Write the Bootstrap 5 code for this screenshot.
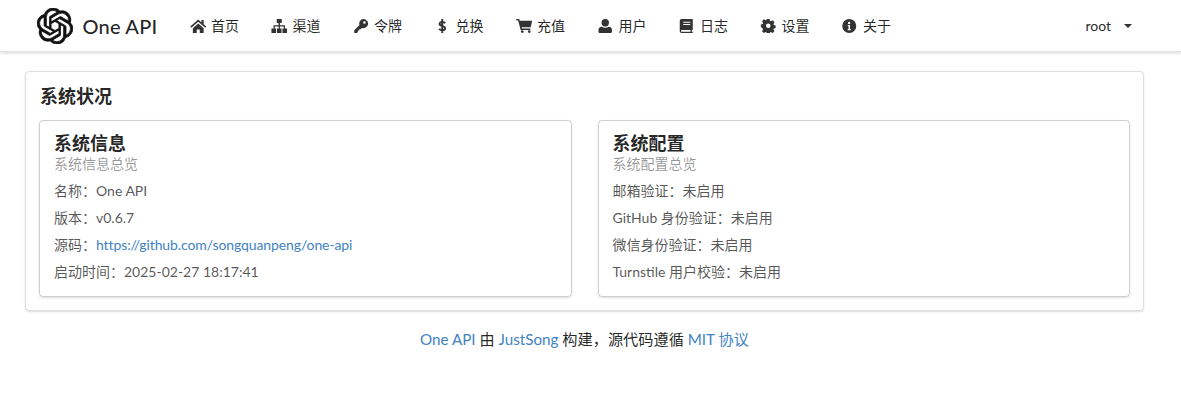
<!DOCTYPE html>
<html lang="zh">
<head>
<meta charset="utf-8">
<title>One API</title>
<link href="https://cdn.jsdelivr.net/npm/bootstrap@5.3.0/dist/css/bootstrap.min.css" rel="stylesheet">
<style>
html,body{height:100%;overflow:hidden}
body{font-family:Lato,"Noto Sans CJK SC",sans-serif;font-size:14px;line-height:20px;color:rgba(0,0,0,.87);background:#fff}
.page-wrap{width:1169px}
.topbar{height:52px;margin-right:-12px;background:#fff;box-shadow:0 1px 3px rgba(34,36,38,.2);border-bottom:1px solid #e3e3e3;padding-left:21px}
.topbar .brand-item{width:152.6px;padding:0 16px;font-size:20px;font-weight:500;letter-spacing:.2px;color:rgba(0,0,0,.87);text-decoration:none;gap:9.5px;white-space:nowrap}
.topbar .menu-item{padding:0 16px;color:rgba(0,0,0,.87);text-decoration:none;white-space:nowrap}
.menu-ico{width:16.5px;height:14px;margin-right:5px;fill:#333;flex:none}
.dollar-ico{fill:none;stroke:#333;stroke-width:2}
.user-item{margin-left:auto;padding-right:49px;color:rgba(0,0,0,.87)}
.user-caret{width:0;height:0;border-left:4px solid transparent;border-right:4px solid transparent;border-top:4px solid #333;margin-left:13px}
.main-wrap{padding:19px 25px 0}
.status-panel{border:1px solid rgba(34,36,38,.15);border-radius:4px;box-shadow:0 1px 2px rgba(34,36,38,.15);padding:13px;height:240px}
.status-title{font-size:18px;font-weight:700;line-height:23px;margin:0 0 12px 1px;color:rgba(0,0,0,.87)}
.info-row{--bs-gutter-x:26px}
.info-box{border:1px solid rgba(34,36,38,.22);border-radius:4px;box-shadow:0 1px 2px rgba(34,36,38,.15);padding:11px 14px 0;height:177px}
.box-head{font-size:18px;font-weight:700;line-height:23px;color:rgba(0,0,0,.85)}
.box-meta{color:rgba(0,0,0,.42);line-height:18px;margin-bottom:4px}
.box-line{color:rgba(0,0,0,.68);line-height:27px}
.box-line a,.foot-line a{color:#4183c4;text-decoration:none}
.box-line a{letter-spacing:-.1px}
.foot-line{text-align:center;margin-top:18px;color:rgba(0,0,0,.87);line-height:20px;font-size:15.2px}
</style>
</head>
<body>
<div class="page-wrap">
<nav class="topbar d-flex align-items-stretch">
<a class="brand-item d-flex align-items-center" href="#">
<svg width="36" height="36" viewBox="0 0 24 24" fill="#111" stroke="#111" stroke-width=".5" class="flex-shrink-0"><path d="M22.2819 9.8211a5.9847 5.9847 0 0 0-.5157-4.9108 6.0462 6.0462 0 0 0-6.5098-2.9A6.0651 6.0651 0 0 0 4.9807 4.1818a5.9847 5.9847 0 0 0-3.9977 2.9 6.0462 6.0462 0 0 0 .7427 7.0966 5.98 5.98 0 0 0 .511 4.9107 6.051 6.051 0 0 0 6.5146 2.9001A5.9847 5.9847 0 0 0 13.2599 24a6.0557 6.0557 0 0 0 5.7718-4.2058 5.9894 5.9894 0 0 0 3.9977-2.9001 6.0557 6.0557 0 0 0-.7475-7.0729zm-9.022 12.6081a4.4755 4.4755 0 0 1-2.8764-1.0408l.1419-.0804 4.7783-2.7582a.7948.7948 0 0 0 .3927-.6813v-6.7369l2.02 1.1686a.071.071 0 0 1 .038.052v5.5826a4.504 4.504 0 0 1-4.4945 4.4944zm-9.6607-4.1254a4.4708 4.4708 0 0 1-.5346-3.0137l.142.0852 4.783 2.7582a.7712.7712 0 0 0 .7806 0l5.8428-3.3685v2.3324a.0804.0804 0 0 1-.0332.0615L9.74 19.9502a4.4992 4.4992 0 0 1-6.1408-1.6464zM2.3408 7.8956a4.485 4.485 0 0 1 2.3655-1.9728V11.6a.7664.7664 0 0 0 .3879.6765l5.8144 3.3543-2.0201 1.1685a.0757.0757 0 0 1-.071 0l-4.8303-2.7865A4.504 4.504 0 0 1 2.3408 7.872zm16.5963 3.8558L13.1038 8.364 15.1192 7.2a.0757.0757 0 0 1 .071 0l4.8303 2.7913a4.4944 4.4944 0 0 1-.6765 8.1042v-5.6772a.79.79 0 0 0-.407-.667zm2.0107-3.0231l-.142-.0852-4.7735-2.7818a.7759.7759 0 0 0-.7854 0L9.409 9.2297V6.8974a.0662.0662 0 0 1 .0284-.0615l4.8303-2.7866a4.4992 4.4992 0 0 1 6.6802 4.66zM8.3065 12.863l-2.02-1.1638a.0804.0804 0 0 1-.038-.0567V6.0742a4.4992 4.4992 0 0 1 7.3757-3.4537l-.142.0805L8.704 5.459a.7948.7948 0 0 0-.3927.6813zm1.0976-2.3654l2.602-1.4998 2.6069 1.4998v2.9994l-2.5974 1.4997-2.6067-1.4997Z"/></svg>
<span>One API</span>
</a>
<a class="menu-item d-flex align-items-center" href="#"><svg class="menu-ico" viewBox="0 0 16 14"><path d="M8 0.500L0 7.500l1 1.200L8 2.800l7 5.900 1-1.200-2.600-2.200V1h-2.200v2.400zM2.600 9.200V14h3.900v-3.600h3V14h3.900V9.200L8 4.600z"/></svg>首页</a>
<a class="menu-item d-flex align-items-center" href="#"><svg class="menu-ico" viewBox="0 0 16 14"><path d="M5.500 0h5v4H8.700v2.200h5V9.500H15.800V14h-4.600V9.500h1.300V7.400H8.600v2.100h1.700V14H5.700V9.500h1.700V7.400H3.500v2.100h1.300V14H.2V9.500h2.100V6.200h5V4H5.500z"/></svg>渠道</a>
<a class="menu-item d-flex align-items-center" href="#"><svg class="menu-ico" viewBox="0 0 16 14"><path fill-rule="evenodd" d="M10.200 0a4.600 4.600 0 1 1-1.600 8.900L7.400 10.200H6v1.400H4.600V13l-.9 1H1v-2.700l5.200-5.200A4.600 4.600 0 0 1 10.200 0zm1 2.200a1.300 1.300 0 1 0 0 2.600 1.300 1.300 0 0 0 0-2.600z"/></svg>令牌</a>
<a class="menu-item d-flex align-items-center" href="#"><svg class="menu-ico dollar-ico" viewBox="0 0 16 14"><path d="M11 4.200c-.7-.8-1.700-1.200-3-1.200-1.600 0-2.700.8-2.700 2 0 2.800 5.600 1.400 5.600 4.200 0 1.200-1.200 2-2.900 2-1.300 0-2.400-.5-3.100-1.300M8 0v14" stroke-width="1.900"/></svg>兑换</a>
<a class="menu-item d-flex align-items-center" href="#"><svg class="menu-ico" viewBox="0 0 16 14"><path d="M0 0h3l.5 1.700H16l-1.600 6.600H5.400l.3 1.300h8.400v1.400H4.400L1.900 1.400H0zM6 11.200a1.400 1.400 0 1 1 0 2.800 1.400 1.400 0 0 1 0-2.800zm7 0a1.400 1.400 0 1 1 0 2.800 1.400 1.400 0 0 1 0-2.800z"/></svg>充值</a>
<a class="menu-item d-flex align-items-center" href="#"><svg class="menu-ico" viewBox="0 0 16 14"><path d="M8 0a3.700 3.700 0 1 1 0 7.400A3.700 3.700 0 0 1 8 0zM4.400 7.800c1 .7 2.200 1 3.600 1s2.600-.3 3.600-1c2 .2 3.200 1.500 3.200 3.700v1c0 .9-.6 1.500-1.500 1.500H2.700c-.9 0-1.500-.6-1.500-1.500v-1c0-2.200 1.200-3.500 3.200-3.700z"/></svg>用户</a>
<a class="menu-item d-flex align-items-center" href="#"><svg class="menu-ico" viewBox="0 0 16 14"><path fill-rule="evenodd" d="M2.500 0h11v11h-.8c-.2.500-.2 1.300 0 1.800h.8V14H2.500C1.300 14 .5 13.100 .5 12V2C.5.900 1.300 0 2.500 0zM4 2.800v1h7v-1zm0 2.200v1h7V5zm-1.300 6.100c-.7 0-.9.400-.9.800s.2.900.9.900h8.600c-.1-.6-.1-1.100 0-1.700z"/></svg>日志</a>
<a class="menu-item d-flex align-items-center" href="#"><svg class="menu-ico" viewBox="0 0 16 14"><path fill-rule="evenodd" d="M6.700 0h2.600l.4 1.800 1 .5L12.400 1.300l1.800 1.900-1 1.700.4 1 1.800.5v2.600l-1.800.5-.4 1 1 1.700-1.800 1.800-1.700-1-1 .4-.4 1.500H6.700l-.4-1.500-1-.4-1.700 1-1.800-1.800 1-1.700-.4-1L.6 8V5.400l1.800-.5.400-1-1-1.700 1.800-1.900 1.700 1 1-.5zM8 4.500a2.300 2.300 0 1 0 0 4.600 2.300 2.300 0 0 0 0-4.600z"/></svg>设置</a>
<a class="menu-item d-flex align-items-center" href="#"><svg class="menu-ico" viewBox="0 0 16 14"><path fill-rule="evenodd" d="M7 0a7 7 0 1 1 0 14A7 7 0 0 1 7 0zm-.1 2.700a1.200 1.200 0 1 0 0 2.400 1.200 1.200 0 0 0 0-2.400zM5.500 6v1.200h.8v2.800h-.8v1.200h3V10h-.8V6z"/></svg>关于</a>
<div class="user-item d-flex align-items-center">root<span class="user-caret"></span></div>
</nav>
<main class="main-wrap">
<section class="status-panel">
<h2 class="status-title">系统状况</h2>
<div class="row info-row">
<div class="col-6"><div class="info-box">
<div class="box-head">系统信息</div>
<div class="box-meta">系统信息总览</div>
<div class="box-line">名称：One API</div>
<div class="box-line">版本：v0.6.7</div>
<div class="box-line">源码：<a href="#">https://github.com/songquanpeng/one-api</a></div>
<div class="box-line">启动时间：2025-02-27 18:17:41</div>
</div></div>
<div class="col-6"><div class="info-box">
<div class="box-head">系统配置</div>
<div class="box-meta">系统配置总览</div>
<div class="box-line">邮箱验证：未启用</div>
<div class="box-line">GitHub 身份验证：未启用</div>
<div class="box-line">微信身份验证：未启用</div>
<div class="box-line">Turnstile 用户校验：未启用</div>
</div></div>
</div>
</section>
<footer class="foot-line"><a href="#">One API</a> 由 <a href="#">JustSong</a> 构建，源代码遵循 <a href="#">MIT 协议</a></footer>
</main>
</div>
</body>
</html>
